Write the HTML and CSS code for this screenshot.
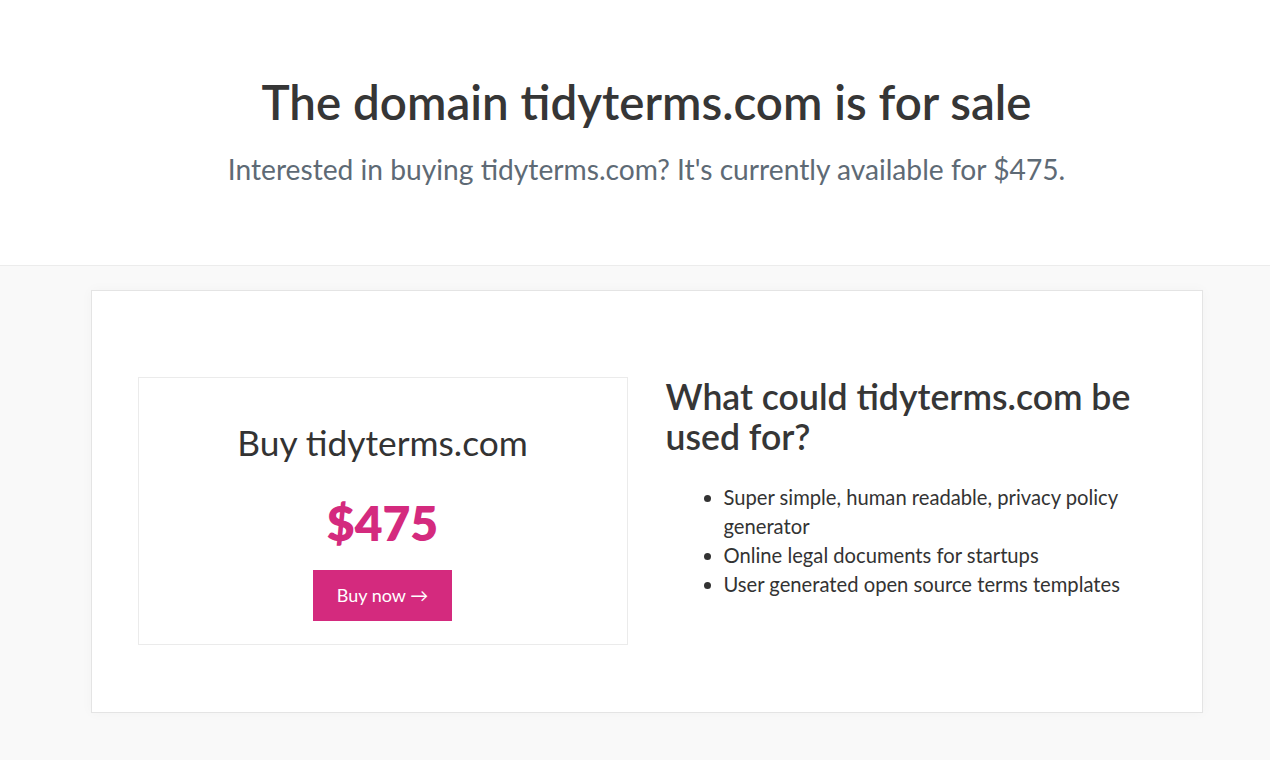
FILE: index.html
```html
<!DOCTYPE html>
<html lang="en">
<head>
<meta charset="utf-8">
<title>tidyterms.com is for sale</title>
<link rel="stylesheet" href="styles.css">
</head>
<body>
<header class="hero">
  <h1 class="hero-title">The domain tidyterms.com is for sale</h1>
  <p class="hero-sub">Interested in buying tidyterms.com? It's currently available for $475.</p>
</header>
<main class="lower">
  <section class="card">
    <div class="buy-box">
      <h2 class="buy-title">Buy tidyterms.com</h2>
      <div class="price">$475</div>
      <a class="buy-btn" href="#">Buy now <span class="arrow">&#8594;</span></a>
    </div>
    <div class="uses">
      <h2 class="uses-title">What could tidyterms.com be used for?</h2>
      <ul class="uses-list">
        <li>Super simple, human readable, privacy policy generator</li>
        <li>Online legal documents for startups</li>
        <li>User generated open source terms templates</li>
      </ul>
    </div>
  </section>
</main>
</body>
</html>
```
FILE: styles.css
```css
html, body {
  margin: 0;
  padding: 0;
}
body {
  font-family: Lato, "Noto Sans", sans-serif;
  color: #333333;
  background: #f9f9f9;
  min-height: 760px;
}
.hero {
  background: #ffffff;
  border-bottom: 1px solid #ececec;
  height: 266px;
  box-sizing: border-box;
  padding: 74px 0 0 23px;
  text-align: center;
}
.hero-title {
  margin: 0;
  font-size: 47.5px;
  font-weight: 600;
  line-height: 56px;
  color: #363636;
}
.hero-sub {
  margin: 22px 0 0;
  font-size: 28.2px;
  line-height: 34px;
  color: #5e6a75;
}
.lower {
  padding: 24px 0 0 23px;
  display: flex;
  justify-content: center;
}
.card {
  width: 1112px;
  height: 423px;
  box-sizing: border-box;
  background: #ffffff;
  border: 1px solid #e4e4e4;
  box-shadow: 0 0 12px rgba(0,0,0,0.03);
  padding: 86px 46px 0;
  display: flex;
  gap: 38px;
  align-items: flex-start;
}
.buy-box {
  width: 490px;
  height: 268px;
  box-sizing: border-box;
  border: 1px solid #ebebeb;
  text-align: center;
  padding-top: 43px;
}
.buy-title {
  margin: 0;
  font-size: 35.3px;
  font-weight: 400;
  line-height: 44px;
  color: #333;
}
.price {
  margin-top: 30px;
  font-size: 48px;
  font-weight: 800;
  line-height: 56px;
  color: #d42a7e;
}
.buy-btn {
  display: inline-block;
  margin-top: 19px;
  width: 139px;
  height: 51px;
  line-height: 51px;
  box-sizing: border-box;
  background: #d42a7e;
  color: #ffffff;
  text-decoration: none;
  font-size: 18px;
}
.arrow {
  font-size: 18px;
}
.uses {
  width: 490px;
}
.uses-title {
  margin: 0;
  font-size: 35.6px;
  font-weight: 600;
  line-height: 40px;
  color: #363636;
}
.uses-list {
  margin: 26px 0 0;
  padding-left: 58px;
  font-size: 20.2px;
  line-height: 29px;
  color: #333;
}
```
